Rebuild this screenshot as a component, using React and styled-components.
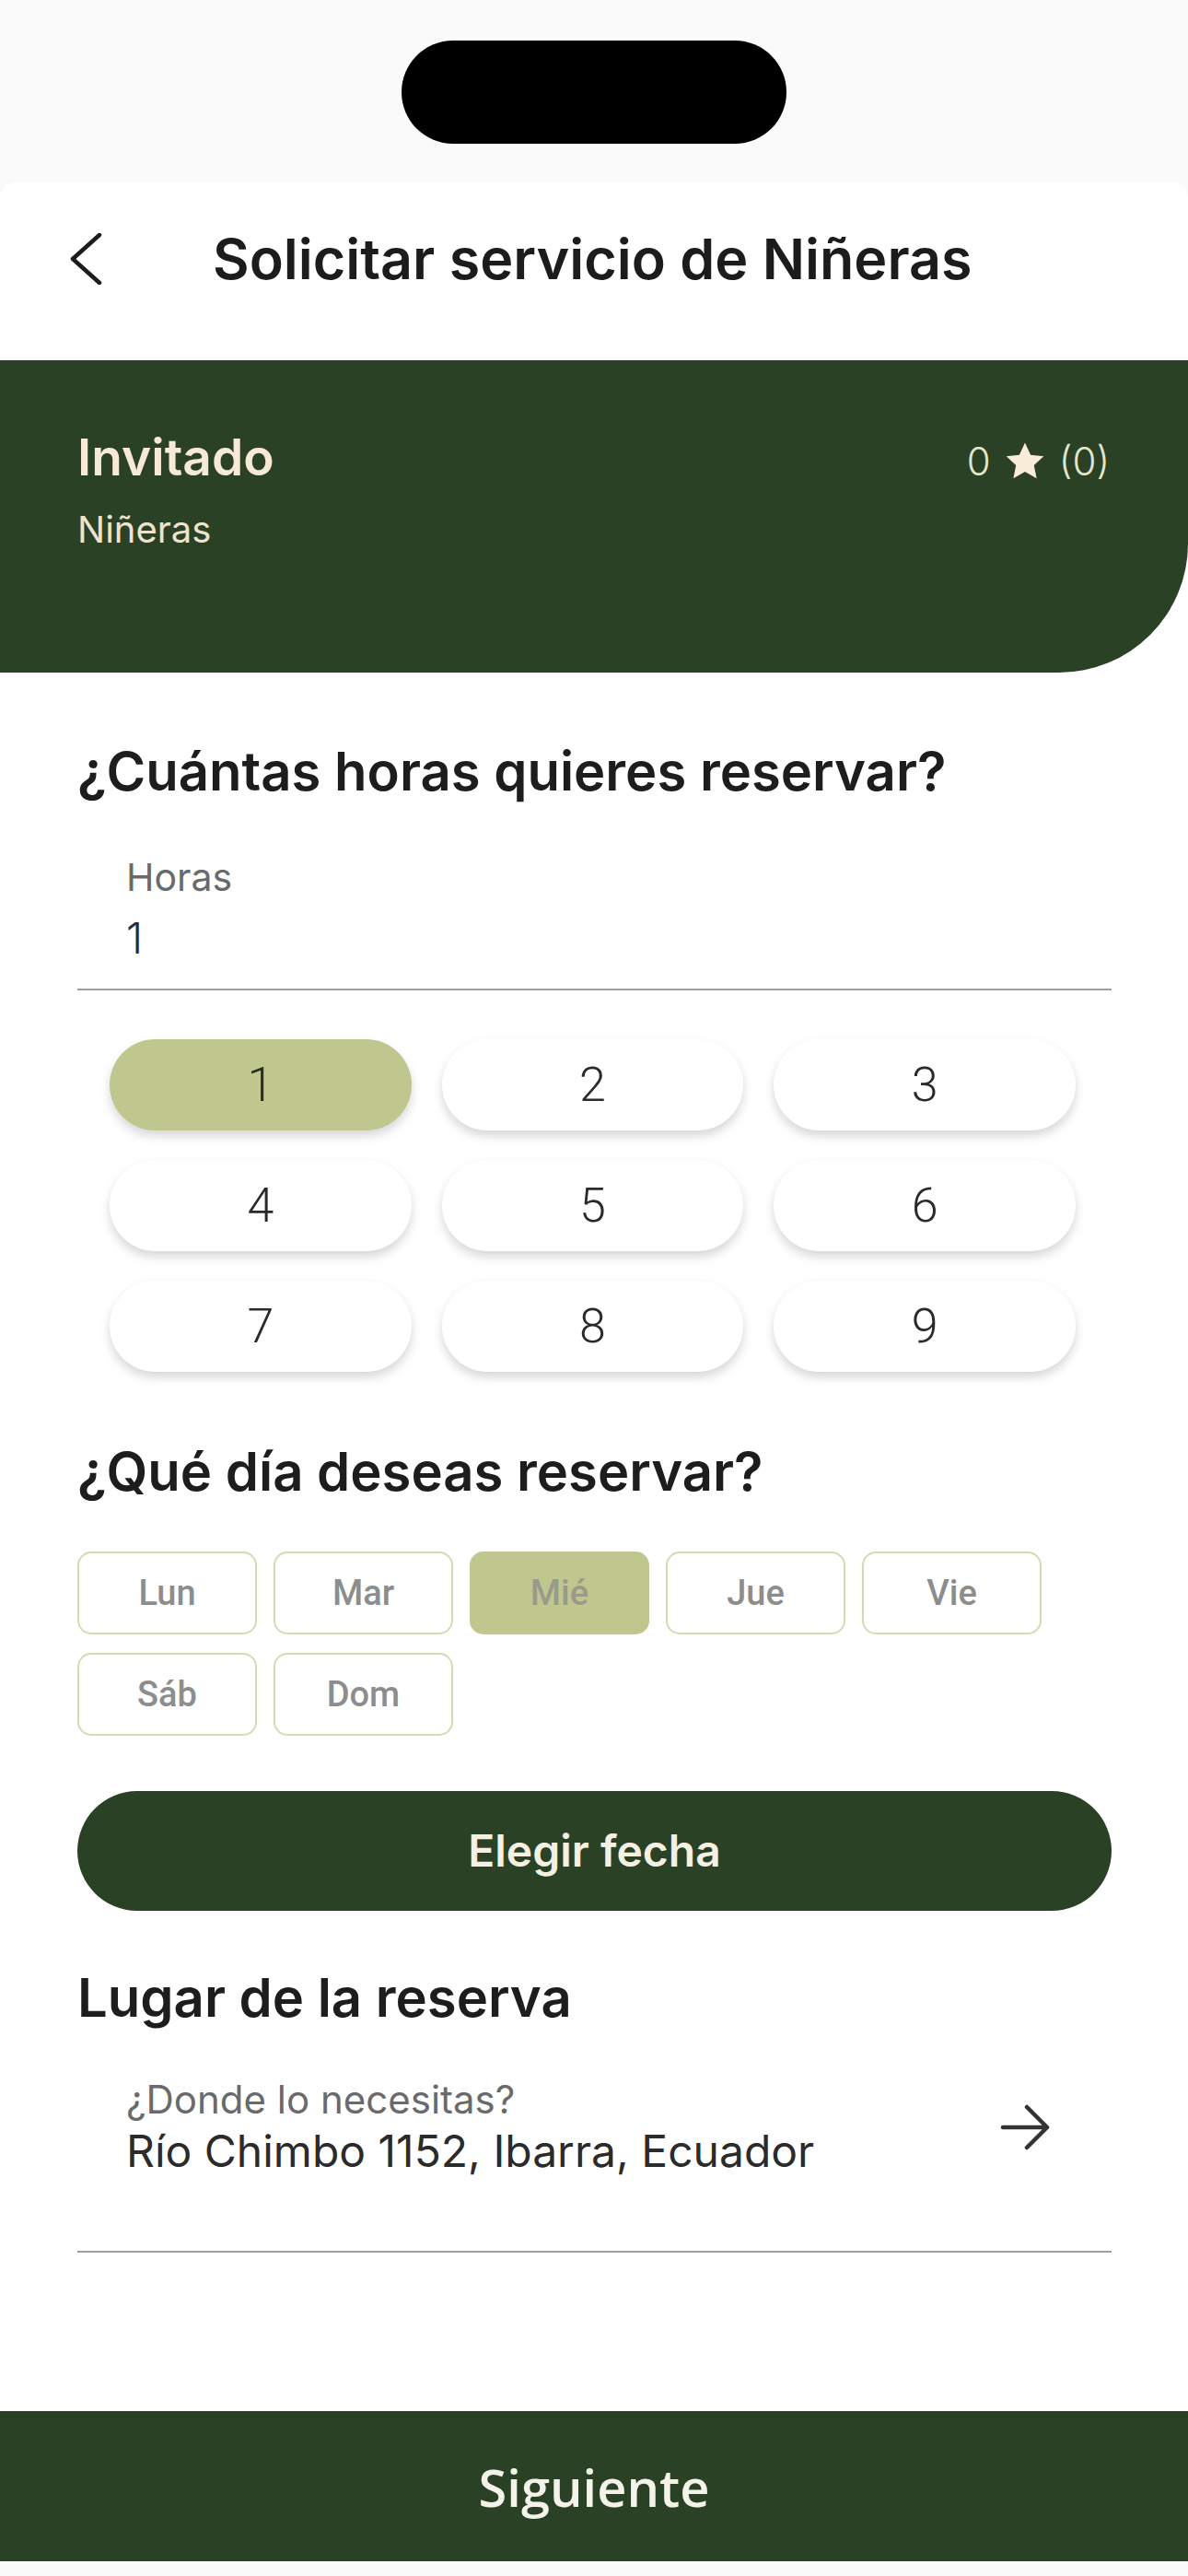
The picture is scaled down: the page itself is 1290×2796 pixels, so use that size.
import React from 'react';
import styled, { createGlobalStyle } from 'styled-components';

const GREEN = '#2b4125';
const OLIVE = '#bfc78f';
const SANS = 'Inter, "Noto Sans", sans-serif';

const GlobalStyle = createGlobalStyle`
  * { box-sizing: border-box; }
  body {
    margin: 0;
    background: #fafafa;
    font-family: ${SANS};
  }
`;

const Screen = styled.div`
  width: 1290px;
  min-height: 2796px;
  display: flex;
  flex-direction: column;
  padding-bottom: 16px;
  background: #fafafa;
`;

const StatusArea = styled.div`
  height: 197px;
  display: flex;
  justify-content: center;
  padding-top: 44px;
`;

const Notch = styled.div`
  width: 418px;
  height: 112px;
  border-radius: 56px;
  background: #000;
`;

const Sheet = styled.div`
  flex: 1;
  display: flex;
  flex-direction: column;
  background: #fff;
  border-radius: 18px 18px 0 0;
`;

const Header = styled.header`
  height: 194px;
  display: flex;
  align-items: center;
  padding: 0 0 26px 75px;
`;

const Title = styled.h1`
  margin: 0 0 0 120px;
  font: 600 61px/1 ${SANS};
  color: #1c1c1c;
`;

const Banner = styled.section`
  height: 339px;
  background: ${GREEN};
  border-bottom-right-radius: 140px;
  padding: 78px 85px 0 84px;
`;

const BannerTop = styled.div`
  display: flex;
  justify-content: space-between;
  align-items: baseline;
`;

const Guest = styled.h2`
  margin: 0;
  font: 600 55px/1 ${SANS};
  color: #f6ead6;
`;

const Rating = styled.div`
  display: flex;
  align-items: center;
  gap: 14px;
  font: 300 42px/1 ${SANS};
  color: #e3e6cc;
`;

const Category = styled.p`
  margin: 31px 0 0;
  font: 400 40px/1 ${SANS};
  color: #ece4cf;
`;

const Content = styled.main`
  display: flex;
  flex-direction: column;
  padding: 0 83px 0 84px;
`;

const SectionTitle = styled.h3`
  margin: ${(p) => p.$top}px 0 0;
  font: 600 58px/1 ${SANS};
  color: #1d1d1d;
`;

const Field = styled.div`
  display: flex;
  align-items: center;
  justify-content: space-between;
  border-bottom: 2px solid #9e9e9e;
  padding: ${(p) => p.$top}px 65px ${(p) => p.$bottom}px 53px;
`;

const FieldText = styled.div`
  display: flex;
  flex-direction: column;
`;

const FieldLabel = styled.span`
  font: 400 ${(p) => p.$size}px/1 ${SANS};
  color: #6a6a6a;
`;

const FieldValue = styled.span`
  margin-top: ${(p) => p.$gap}px;
  font: ${(p) => p.$weight} ${(p) => p.$size}px/1 ${SANS};
  color: #2b2b2b;
`;

const HourGrid = styled.div`
  display: grid;
  grid-template-columns: repeat(3, 1fr);
  gap: 32px 33px;
  margin-top: 53px;
  padding: 0 39px 0 35px;
`;

const HourButton = styled.button`
  height: 99px;
  border: none;
  border-radius: 50px;
  background: ${(p) => (p.$active ? OLIVE : '#fff')};
  box-shadow: 0 6px 11px rgba(0, 0, 0, 0.16);
  font: 300 52px/1 Roboto, sans-serif;
  color: #2a2a2a;
`;

const DayGrid = styled.div`
  display: flex;
  flex-wrap: wrap;
  gap: 20px 18px;
  width: 1060px;
  margin-top: 58px;
`;

const DayChip = styled.button`
  width: 195px;
  height: 90px;
  border: 2px solid ${(p) => (p.$active ? OLIVE : '#d5dab5')};
  border-radius: 15px;
  background: ${(p) => (p.$active ? OLIVE : '#fff')};
  font: 500 38px/1 Roboto, sans-serif;
  color: ${(p) => (p.$active ? '#9a9a8a' : '#8d8d8d')};
`;

const PillButton = styled.button`
  height: 130px;
  margin-top: 60px;
  border: none;
  border-radius: 65px;
  background: ${GREEN};
  font: 600 48px/1 ${SANS};
  color: #f4f1e4;
`;

const NextBar = styled.button`
  height: 163px;
  margin-top: auto;
  border: none;
  background: ${GREEN};
  font: 600 56px/1 "Open Sans", sans-serif;
  color: #f3f3ea;
`;

const BackIcon = () => (
  <svg width="36" height="56" viewBox="0 0 36 56" fill="none">
    <polyline points="33,2 4,28 33,54" stroke="#1c1c1c" strokeWidth="4.5" strokeLinecap="round" strokeLinejoin="round" />
  </svg>
);

const Star = () => (
  <svg width="46" height="44" viewBox="0 0 24 23">
    <path d="M12 0.8l3.2 6.9 7.4.8-5.5 5.1 1.5 7.4L12 17.2 5.4 21l1.5-7.4L1.4 8.5l7.4-.8z" fill="#f9ecd9" />
  </svg>
);

const ArrowIcon = () => (
  <svg width="56" height="52" viewBox="0 0 56 52" fill="none">
    <path d="M3 26h48M29 4l22 22-22 22" stroke="#333" strokeWidth="4.5" strokeLinecap="round" strokeLinejoin="round" />
  </svg>
);

const hours = [1, 2, 3, 4, 5, 6, 7, 8, 9];
const days = ['Lun', 'Mar', 'Mié', 'Jue', 'Vie', 'Sáb', 'Dom'];

export default function App() {
  return (
    <Screen>
      <GlobalStyle />
      <StatusArea>
        <Notch />
      </StatusArea>
      <Sheet>
        <Header>
          <BackIcon />
          <Title>Solicitar servicio de Niñeras</Title>
        </Header>
        <Banner>
          <BannerTop>
            <Guest>Invitado</Guest>
            <Rating>
              <span>0</span>
              <Star />
              <span>(0)</span>
            </Rating>
          </BannerTop>
          <Category>Niñeras</Category>
        </Banner>
        <Content>
          <SectionTitle $top={78}>¿Cuántas horas quieres reservar?</SectionTitle>
          <Field $top={66} $bottom={32}>
            <FieldText>
              <FieldLabel $size={41}>Horas</FieldLabel>
              <FieldValue $gap={22} $size={46} $weight={300}>1</FieldValue>
            </FieldText>
          </Field>
          <HourGrid>
            {hours.map((h) => (
              <HourButton key={h} $active={h === 1}>{h}</HourButton>
            ))}
          </HourGrid>
          <SectionTitle $top={79}>¿Qué día deseas reservar?</SectionTitle>
          <DayGrid>
            {days.map((d) => (
              <DayChip key={d} $active={d === 'Mié'}>{d}</DayChip>
            ))}
          </DayGrid>
          <PillButton>Elegir fecha</PillButton>
          <SectionTitle $top={65}>Lugar de la reserva</SectionTitle>
          <Field $top={61} $bottom={84}>
            <FieldText>
              <FieldLabel $size={42}>¿Donde lo necesitas?</FieldLabel>
              <FieldValue $gap={11} $size={48} $weight={400}>Río Chimbo 1152, Ibarra, Ecuador</FieldValue>
            </FieldText>
            <ArrowIcon />
          </Field>
        </Content>
        <NextBar>Siguiente</NextBar>
      </Sheet>
    </Screen>
  );
}
